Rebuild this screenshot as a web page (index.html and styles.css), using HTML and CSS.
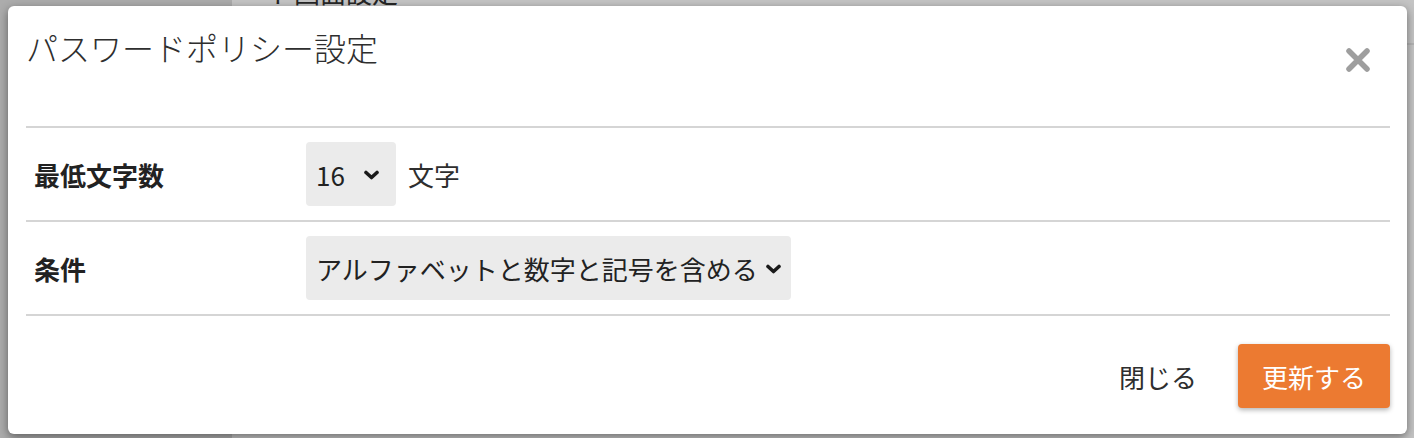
FILE: index.html
```html
<!DOCTYPE html>
<html lang="ja">
<head>
<meta charset="utf-8">
<title>パスワードポリシー設定</title>
<link rel="stylesheet" href="styles.css">
</head>
<body>
<div class="page">
  <aside class="sidebar"></aside>
  <main class="main">
    <div class="main-title">ト画面設定</div>
    <div class="main-rule"></div>
  </main>
</div>

<div class="modal" role="dialog">
  <header class="modal-header">
    <h1 class="modal-title">パスワードポリシー設定</h1>
    <button class="close" aria-label="閉じる">
      <svg width="26" height="26" viewBox="0 0 26 26"><path d="M4 4 L22 22 M22 4 L4 22" stroke="#9e9e9e" stroke-width="5.5" stroke-linecap="round" fill="none"/></svg>
    </button>
  </header>

  <div class="row">
    <div class="row-label">最低文字数</div>
    <div class="row-field">
      <div class="select select-short">
        <span class="select-text">16</span>
        <svg class="chev" width="15" height="10" viewBox="0 0 15 10"><path d="M2 2.5 L7.5 7.5 L13 2.5" stroke="#1a1a1a" stroke-width="3.6" stroke-linecap="round" stroke-linejoin="round" fill="none"/></svg>
      </div>
      <span class="unit">文字</span>
    </div>
  </div>

  <div class="row">
    <div class="row-label">条件</div>
    <div class="row-field">
      <div class="select">
        <span class="select-text">アルファベットと数字と記号を含める</span>
        <svg class="chev" width="15" height="10" viewBox="0 0 15 10"><path d="M2 2.5 L7.5 7.5 L13 2.5" stroke="#1a1a1a" stroke-width="3.6" stroke-linecap="round" stroke-linejoin="round" fill="none"/></svg>
      </div>
    </div>
  </div>

  <footer class="modal-footer">
    <button class="btn-text">閉じる</button>
    <button class="btn-primary">更新する</button>
  </footer>
</div>
</body>
</html>
```

FILE: styles.css
```css
html, body {
  margin: 0;
  padding: 0;
  width: 1414px;
  height: 438px;
  overflow: hidden;
  font-family: "Noto Sans CJK JP", "Noto Sans", sans-serif;
}

.page {
  display: flex;
  width: 1414px;
  height: 438px;
}

.sidebar {
  width: 232px;
  background: #acacac;
  flex: none;
}

.main {
  flex: 1;
  background: #c4c4c4;
  padding-left: 36px;
}

.main-title {
  margin-top: -24px;
  font-size: 26px;
  line-height: 32px;
  color: #262626;
}

.main-rule {
  margin-top: 35px;
  height: 2px;
  background: #b4b4b4;
}

.modal {
  position: absolute;
  left: 8px;
  top: 6px;
  width: 1399px;
  height: 428px;
  box-sizing: border-box;
  padding: 0 17px 0 18px;
  background: #fff;
  border-radius: 6px;
  box-shadow: 0 3px 10px rgba(0, 0, 0, 0.45);
}

.modal-header {
  height: 122px;
  box-sizing: border-box;
  padding-top: 19px;
  border-bottom: 2px solid #d5d5d5;
  display: flex;
  justify-content: space-between;
  align-items: flex-start;
}

.modal-title {
  margin: 0;
  font-size: 32px;
  line-height: 45px;
  font-weight: 300;
  color: #2e2e2e;
}

.close {
  margin: 22px 19px 0 0;
  padding: 0;
  border: 0;
  background: none;
  width: 26px;
  height: 26px;
  display: block;
}

.close svg { display: block; }

.row {
  display: flex;
  align-items: center;
  padding: 14px 0;
  border-bottom: 2px solid #d5d5d5;
}

.row-label {
  width: 272px;
  padding-left: 8px;
  flex: none;
  font-size: 26px;
  font-weight: 700;
  color: #222;
}

.row-field {
  display: flex;
  align-items: center;
  gap: 12px;
}

.select {
  height: 64px;
  box-sizing: border-box;
  padding: 0 10px 0 10px;
  background: #ebebeb;
  border-radius: 4px;
  display: flex;
  align-items: center;
  gap: 8px;
  font-size: 26px;
  color: #222;
}

.select-short {
  width: 90px;
  padding-right: 17px;
  justify-content: space-between;
}

.chev { display: block; flex: none; margin-top: 1px; }

.unit {
  font-size: 26px;
  color: #2e2e2e;
}

.modal-footer {
  display: flex;
  justify-content: flex-end;
  align-items: center;
  gap: 41px;
  padding: 28px 0 26px;
}

.btn-text {
  border: 0;
  background: none;
  padding: 0;
  font-family: inherit;
  font-size: 26px;
  color: #2e2e2e;
}

.btn-primary {
  width: 152px;
  height: 64px;
  border: 0;
  border-radius: 4px;
  background: #ec7a31;
  color: #fff;
  font-family: inherit;
  font-size: 26px;
  box-shadow: 0 2px 5px rgba(0, 0, 0, 0.3);
}
```
